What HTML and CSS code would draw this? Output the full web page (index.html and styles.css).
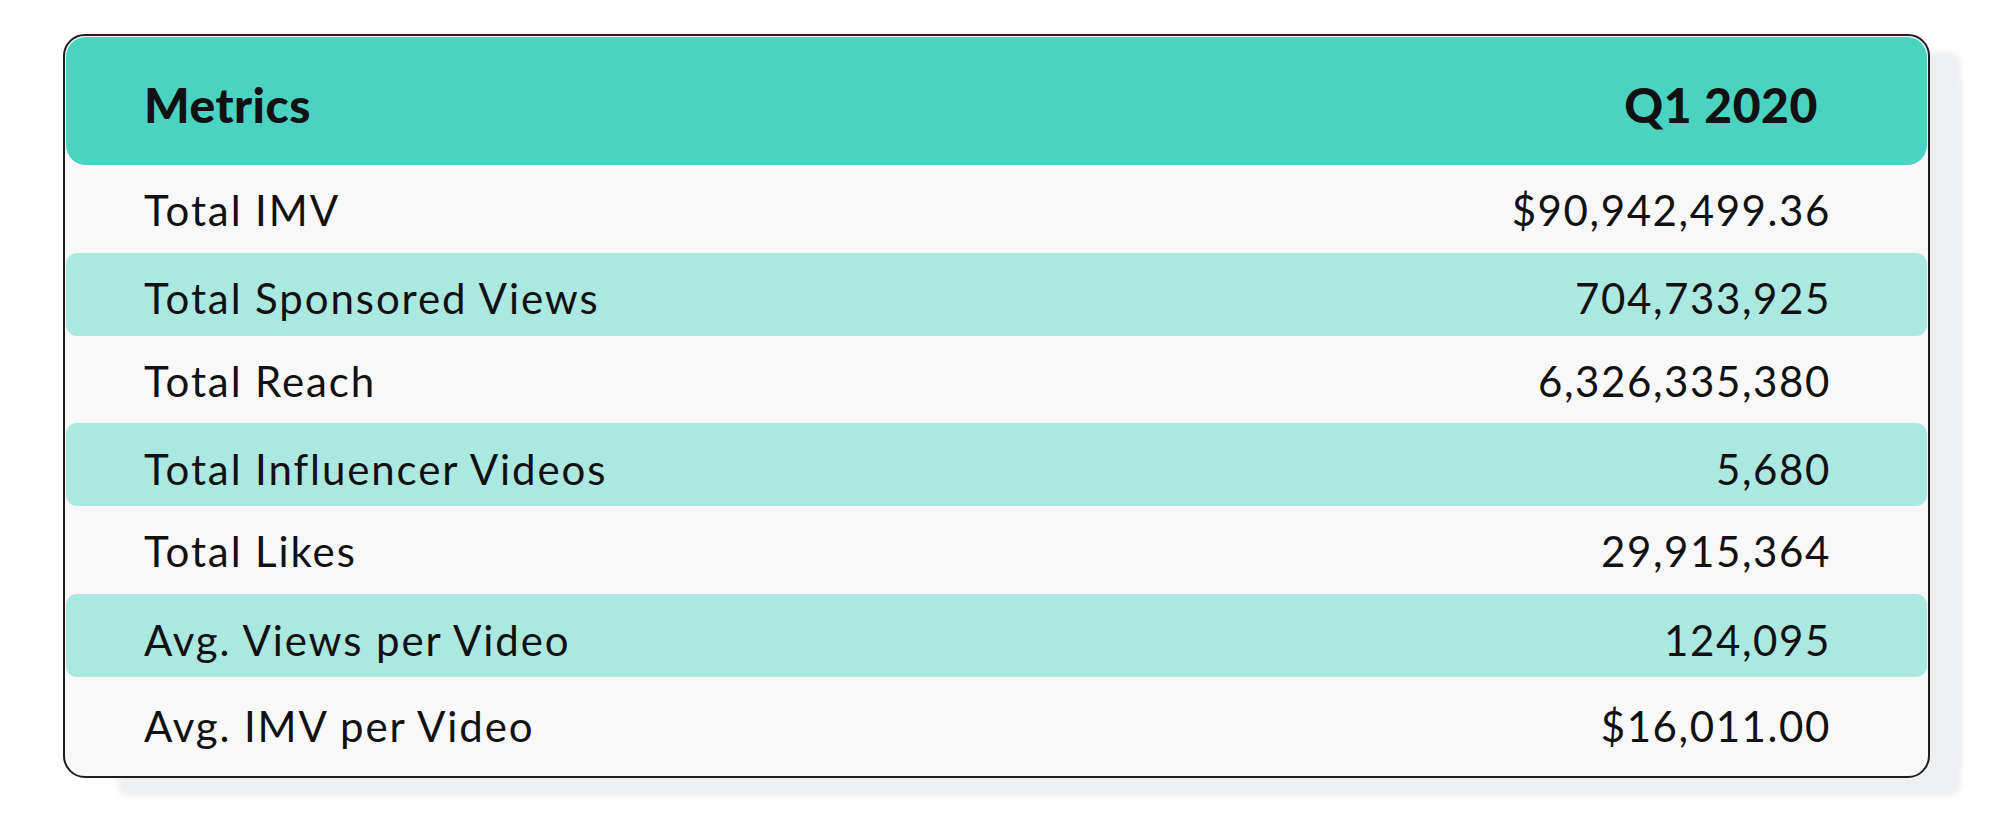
FILE: index.html
```html
<!DOCTYPE html>
<html>
<head>
<meta charset="utf-8">
<link rel="stylesheet" href="styles.css">
</head>
<body>
<div class="page">
  <div class="card">
    <div class="head">
      <span class="hcell">Metrics</span>
      <span class="hcell hval">Q1 2020</span>
    </div>
    <div class="row"><span class="lbl">Total IMV</span><span class="val">$90,942,499.36</span></div>
    <div class="row stripe"><span class="lbl">Total Sponsored Views</span><span class="val">704,733,925</span></div>
    <div class="row"><span class="lbl">Total Reach</span><span class="val">6,326,335,380</span></div>
    <div class="row stripe"><span class="lbl">Total Influencer Videos</span><span class="val">5,680</span></div>
    <div class="row"><span class="lbl">Total Likes</span><span class="val">29,915,364</span></div>
    <div class="row stripe"><span class="lbl">Avg. Views per Video</span><span class="val">124,095</span></div>
    <div class="row last"><span class="lbl">Avg. IMV per Video</span><span class="val">$16,011.00</span></div>
  </div>
</div>
</body>
</html>
```
FILE: styles.css
```css
html, body {
  margin: 0;
  padding: 0;
  background: #ffffff;
}
body {
  font-family: Lato, "Open Sans", sans-serif;
  color: #111111;
}
.page {
  padding: 34px 0 49px 63px;
  width: 1867px;
}
.card {
  box-sizing: border-box;
  width: 1867px;
  height: 744px;
  border: 2px solid #1e1e1e;
  border-radius: 22px;
  background: #f8f8f8;
  padding: 1px;
  display: flex;
  flex-direction: column;
  box-shadow: 43px 6px 6px -12px #eeeff1, 43px 30px 6px -12px #eeeff1;
}
.head {
  height: 128px;
  background: #4bd3c2;
  border-radius: 20px;
  display: flex;
  align-items: center;
  justify-content: space-between;
  padding: 8px 109px 0 78px;
  box-sizing: border-box;
}
.hcell {
  font-size: 48px;
  font-weight: 900;
  letter-spacing: 0.5px;
}
.hval {
  letter-spacing: 0.6px;
}
.row {
  height: 88px;
  display: flex;
  align-items: center;
  justify-content: space-between;
  padding: 2px 96px 0 78px;
  box-sizing: border-box;
  font-size: 42px;
  font-weight: 400;
}
.lbl {
  letter-spacing: 1.9px;
}
.val {
  letter-spacing: 1.6px;
}
.row.stripe {
  height: 83px;
  background: #abe8e0;
  border-radius: 11px;
  padding-top: 8px;
}
.row.last {
  height: 98px;
  padding-top: 0;
}
```
